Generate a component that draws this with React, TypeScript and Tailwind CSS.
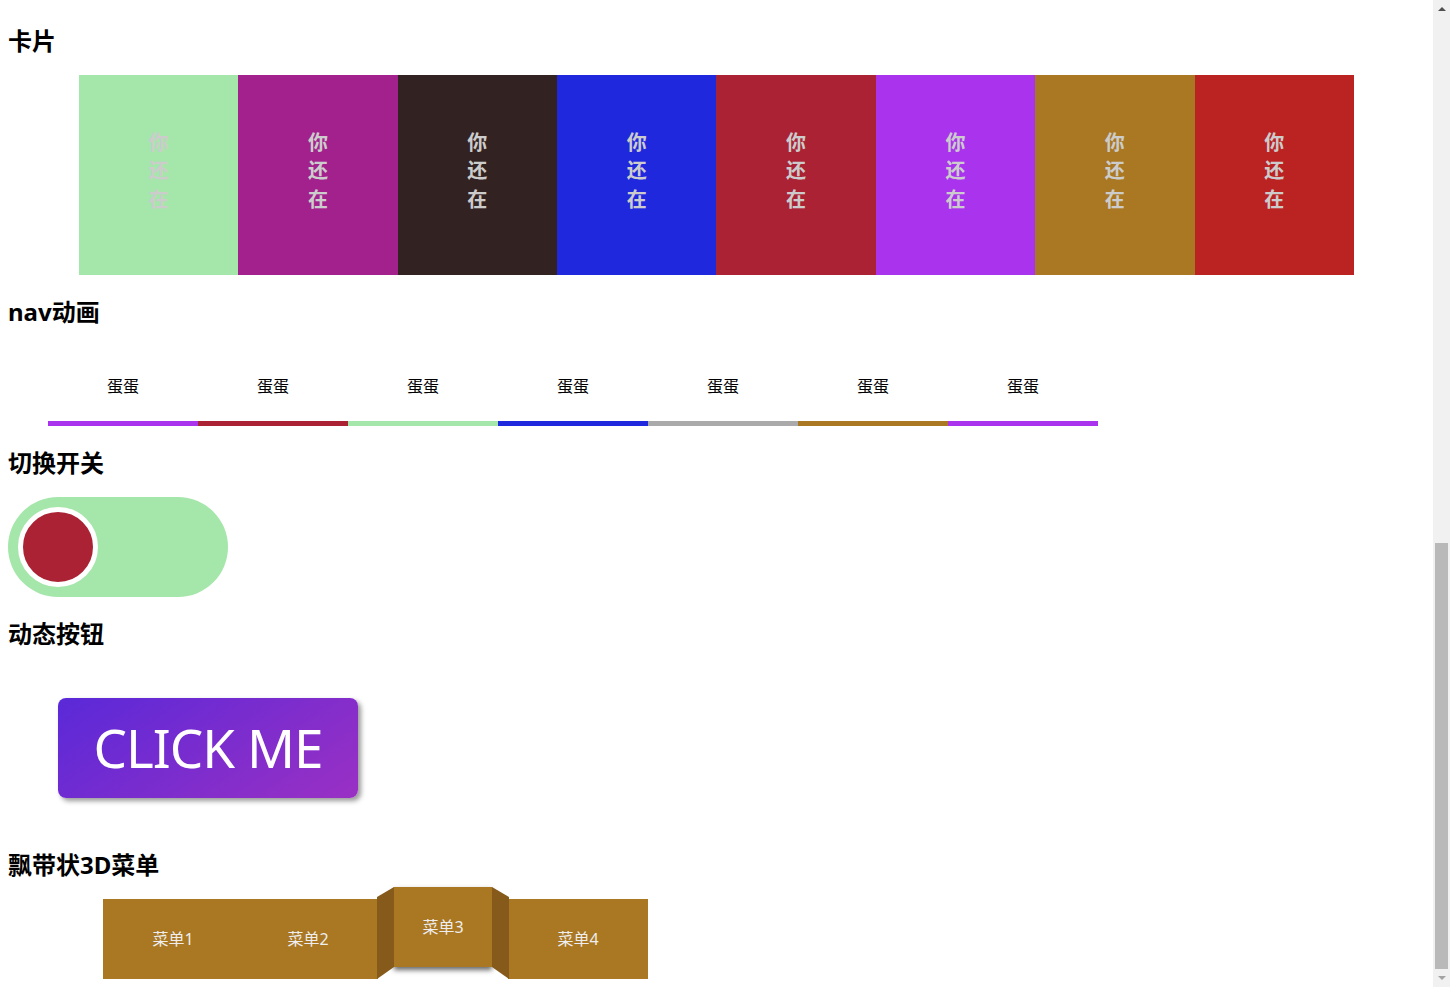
const CARDS = [
  'bg-[#a5e6aa]',
  'bg-[#a2218d]',
  'bg-[#332222]',
  'bg-[#2028de]',
  'bg-[#aa2233]',
  'bg-[#aa33ee]',
  'bg-[#aa7722]',
  'bg-[#bb2222]',
];

const NAV = [
  'border-[#aa33ee]',
  'border-[#aa2233]',
  'border-[#a5e6aa]',
  'border-[#2028de]',
  'border-[#aaaaaa]',
  'border-[#aa7722]',
  'border-[#aa33ee]',
];

function Heading({ children }: { children: React.ReactNode }) {
  return <h2 className="mt-[21px] mb-[18px] h-8 text-2xl leading-8 font-bold text-black">{children}</h2>;
}

function Scrollbar() {
  return (
    <div className="flex w-[17px] shrink-0 flex-col bg-[#f1f1f1]">
      <div className="flex h-[17px] items-center justify-center">
        <div className="h-0 w-0 border-x-[4px] border-b-[4px] border-x-transparent border-b-[#505050]" />
      </div>
      <div className="mt-[526px] mx-[2px] h-[426px] bg-[#b9b9b9]" />
      <div className="flex h-[17px] items-center justify-center">
        <div className="h-0 w-0 border-x-[4px] border-t-[4px] border-x-transparent border-t-[#a3a3a3]" />
      </div>
    </div>
  );
}

export default function App() {
  return (
    <div className="flex h-[987px] overflow-hidden bg-white font-['Noto_Sans','Noto_Sans_CJK_SC',sans-serif]">
      <div className="min-w-0 flex-1 overflow-hidden px-2 pt-[4px]">
        <Heading>卡片</Heading>
        <div className="ml-[70.9px] flex h-[200px] w-[1275px]">
          {CARDS.map((c) => (
            <div key={c} className={`flex flex-1 flex-col items-center justify-center pb-[7px] text-xl leading-[28.5px] font-bold text-[#cccccc] ${c}`}>
              <span>你</span>
              <span>还</span>
              <span>在</span>
            </div>
          ))}
        </div>

        <Heading>nav动画</Heading>
        <div className="ml-10 flex">
          {NAV.map((c, i) => (
            <div key={i} className={`h-20 w-[150px] border-b-[5px] pt-[28px] text-center text-base leading-6 text-black ${c}`}>
              蛋蛋
            </div>
          ))}
        </div>

        <Heading>切换开关</Heading>
        <div className="flex h-[100px] w-[220px] items-center rounded-full bg-[#a5e6aa] pl-[10px]">
          <div className="h-20 w-20 rounded-full border-[5px] border-white bg-[#aa2233]" />
        </div>

        <Heading>动态按钮</Heading>
        <div className="px-[50px] py-[30px]">
          <div className="flex h-[100px] w-[300px] items-center justify-center rounded-lg bg-[linear-gradient(145deg,#5a29d8,#9a30c4)] text-[53px] tracking-[-1px] text-white shadow-[3px_3px_5px_#999999]">
            CLICK ME
          </div>
        </div>

        <Heading>飘带状3D菜单</Heading>
        <div className="ml-[95px] flex h-20 w-[545px]">
          <div className="w-[140px] shrink-0 bg-[#aa7722] pt-7 text-center text-base leading-6 text-[#eeeeee]">菜单1</div>
          <div className="-ml-[5px] w-[140px] shrink-0 bg-[#aa7722] pt-7 text-center text-base leading-6 text-[#eeeeee]">菜单2</div>
          <div className="relative -ml-[5px] w-[140px] shrink-0">
            <div className="absolute left-[21px] right-[21px] top-[-12px] h-20 bg-[#aa7722] pt-7 text-center text-base leading-6 text-[#eeeeee] shadow-[0_3px_5px_rgba(0,0,0,0.6)]">
              菜单3
            </div>
            <div className="absolute left-[4px] top-[-12px] h-[92px] w-[17px] bg-[#855a1a] [clip-path:polygon(0_10px,100%_0,100%_80px,0_100%)]" />
            <div className="absolute right-[4px] top-[-12px] h-[92px] w-[17px] bg-[#855a1a] [clip-path:polygon(0_0,100%_10px,100%_100%,0_80px)]" />
          </div>
          <div className="-ml-[5px] w-[140px] shrink-0 bg-[#aa7722] pt-7 text-center text-base leading-6 text-[#eeeeee]">菜单4</div>
        </div>
      </div>
      <Scrollbar />
    </div>
  );
}
